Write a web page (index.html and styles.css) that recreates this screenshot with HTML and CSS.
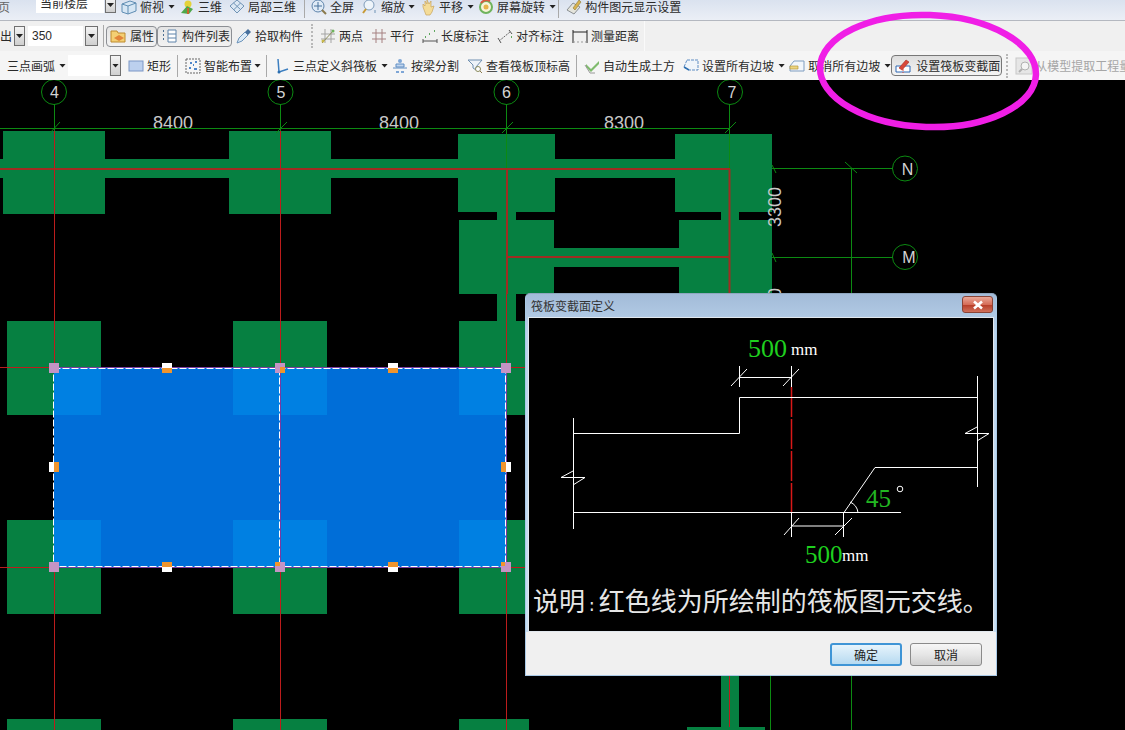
FILE: index.html
```html
<!DOCTYPE html>
<html lang="zh">
<head>
<meta charset="utf-8">
<title>筏板变截面定义</title>
<link rel="stylesheet" href="styles.css">
</head>
<body>
<div class="app">
  <div class="row row-one">
    <span class="lbl page-mark">页</span>
    <div class="combo m26"><span class="field w68">当前楼层</span><span class="cbtn m1 w11"><i class="arrow"></i></span></div>
    <div class="tool m5"><svg class="ico" viewBox="0 0 16 16"><path d="M1 5 9 2l6 2v8l-8 3-6-2z" fill="#d6e6f4" stroke="#5f8db3"/><path d="M1 5l6 2v8M7 7l8-3" fill="none" stroke="#5f8db3"/></svg><span class="lbl">俯视</span></div><i class="arrow m4"></i>
    <div class="tool m4"><svg class="ico" viewBox="0 0 16 16"><circle cx="9" cy="5" r="3.500" fill="#e4d23a"/><path d="M2 14 8 7l6 3-4 5z" fill="#4fa84a"/><path d="M9 9v6" stroke="#c9662a" stroke-width="2"/></svg><span class="lbl">三维</span></div>
    <div class="tool m7"><svg class="ico" viewBox="0 0 16 16"><path d="M8 1l7 6-7 7-7-7z" fill="#dbe7f3" stroke="#6f93b5"/><path d="M4.500 4 11.500 10.500M8 7.500 4.500 11M11.500 4 8 7.500" stroke="#6f93b5" fill="none"/></svg><span class="lbl">局部三维</span></div>
    <i class="sep m8"></i>
    <div class="tool m6"><svg class="ico" viewBox="0 0 16 16"><circle cx="7" cy="7" r="6" fill="#dfeaf6" stroke="#5f84ab"/><path d="M7 3v8M3 7h8" stroke="#47709b"/><path d="M11 11l4 4" stroke="#8a7a4c" stroke-width="2"/></svg><span class="lbl">全屏</span></div>
    <div class="tool m8"><svg class="ico" viewBox="0 0 16 16"><circle cx="7" cy="6" r="5" fill="#eef4fa" stroke="#7f9cba"/><path d="M4 10l-3 4" stroke="#c79a36" stroke-width="2"/><path d="M13 11v3" stroke="#6f93b5"/></svg><span class="lbl">缩放</span></div><i class="arrow m3"></i>
    <div class="tool m5"><svg class="ico" viewBox="0 0 16 16"><path d="M3 8V5l2 2V2l2 3V1l2 4 2-3v6l3-1-2 6-2 3H6z" fill="#f4dc98" stroke="#c9a55c" stroke-width=".7"/></svg><span class="lbl">平移</span></div><i class="arrow m4"></i>
    <div class="tool m4"><svg class="ico" viewBox="0 0 16 16"><circle cx="8" cy="8" r="6" fill="#f7f3d8" stroke="#6fb35d" stroke-width="2"/><path d="M3 4a7 7 0 0 1 9-2" fill="none" stroke="#d9573f" stroke-width="2"/><circle cx="8" cy="8" r="2.500" fill="#e7b34a"/></svg><span class="lbl">屏幕旋转</span></div><i class="arrow m4"></i>
    <i class="sep m2"></i>
    <div class="tool m7"><svg class="ico" viewBox="0 0 16 16"><path d="M1 11l6-7 7 4-6 7z" fill="#e4e4dc" stroke="#8a8f92"/><path d="M7 9l6-8 2 2-6 8z" fill="#d8b24e" stroke="#8c7a3a" stroke-width=".6"/></svg><span class="lbl">构件图元显示设置</span></div>
  </div>

  <div class="row row-two">
    <span class="lbl">出</span>
    <span class="cbtn m2 w11"><i class="arrow"></i></span>
    <div class="combo m3"><span class="field w55 num">350</span><span class="cbtn m2 w13"><i class="arrow"></i></span></div>
    <i class="sep m5"></i>
    <div class="tool pressed m2 w51"><svg class="ico" viewBox="0 0 16 16"><path d="M1 3h6l1 2h7v9H1z" fill="#f4cf73" stroke="#bd8a2e"/><path d="M4 10l5-3 5 3-5 3z" fill="#e2843a"/></svg><span class="lbl l1">属性</span></div>
    <div class="tool pressed w75"><svg class="ico" viewBox="0 0 16 16"><path d="M7 2h8v12H7z" fill="#fff" stroke="#5f84ab"/><path d="M7 6h8M7 10h8" stroke="#5f84ab"/><path d="M2 3h2M2 7h2M2 11h2" stroke="#4d6f92" stroke-width="2" stroke-dasharray="1 1"/></svg><span class="lbl l2">构件列表</span></div>
    <div class="tool m4"><svg class="ico" viewBox="0 0 16 16"><path d="M1 15l2-5 6-6 3 3-6 6z" fill="#dbeaf7" stroke="#6b93ba"/><path d="M9 4l3-3 3 3-3 3z" fill="#466f9c"/></svg><span class="lbl">拾取构件</span></div>
    <i class="grip m8"></i>
    <div class="tool m7"><svg class="ico" viewBox="0 0 16 16"><path d="M1 6h14M1 11h14M5 1v14M11 1v14" stroke="#a3a3a3" fill="none"/><path d="M2 15 14 2" stroke="#8c8c5c"/><circle cx="3" cy="13" r="1.500" fill="#c9b84a"/><circle cx="13" cy="3" r="1.500" fill="#6fb35d"/></svg><span class="lbl">两点</span></div>
    <div class="tool m8"><svg class="ico" viewBox="0 0 16 16"><path d="M1 5h14M1 11h14M5 1v14M11 1v14" stroke="#a58080" fill="none"/></svg><span class="lbl">平行</span></div>
    <div class="tool m8"><svg class="ico" viewBox="0 0 16 16"><path d="M1 11v4M15 11v4M1 13h14" stroke="#555" fill="none"/><path d="M3 9h1M7 6h1M12 3h1" stroke="#5fa85f" stroke-width="2"/></svg><span class="lbl">长度标注</span></div>
    <div class="tool m8"><svg class="ico" viewBox="0 0 16 16"><path d="M2 13 13 4" stroke="#666" stroke-dasharray="2 1"/><path d="M1 10l3 5M12 2l3 4" stroke="#555" fill="none"/><path d="M14 9h1" stroke="#5fa85f" stroke-width="2"/></svg><span class="lbl">对齐标注</span></div>
    <div class="tool m8"><svg class="ico" viewBox="0 0 16 16"><path d="M1 2v13M15 2v13M1 4h14" stroke="#222" fill="none"/><path d="M1 14h14" stroke="#999" stroke-dasharray="2 2"/></svg><span class="lbl">测量距离</span></div>
    <i class="row-end m5"></i>
  </div>

  <div class="row row-three">
    <span class="lbl m7">三点画弧</span><i class="arrow m4"></i>
    <div class="combo m2"><span class="field w41"></span><span class="cbtn m1 w11"><i class="arrow"></i></span></div>
    <div class="tool m7"><svg class="ico" viewBox="0 0 16 16"><rect x="1" y="3" width="14" height="10" fill="#bcd0ee" stroke="#7c97c6"/></svg><span class="lbl">矩形</span></div>
    <i class="sep m6"></i>
    <div class="tool m7"><svg class="ico" viewBox="0 0 16 16"><rect x="1" y="1" width="14" height="14" fill="#f6f6f6" stroke="#666" stroke-dasharray="2 1"/><path d="M5 5h2M10 4h2M4 10h2M9 11h3M8 7h1" stroke="#4e86c9" stroke-width="2"/></svg><span class="lbl">智能布置</span></div><i class="arrow m2"></i>
    <i class="sep m5"></i>
    <div class="tool m7"><svg class="ico" viewBox="0 0 16 16"><path d="M4 1 5 14 14 11" fill="none" stroke="#3d7fc0" stroke-width="1.500"/><circle cx="5" cy="14" r="1.500" fill="#2b6eb0"/></svg><span class="lbl">三点定义斜筏板</span></div><i class="arrow m4"></i>
    <div class="tool m4"><svg class="ico" viewBox="0 0 16 16"><circle cx="8" cy="3" r="2" fill="#7ea6d6"/><path d="M4 6h8v3H4zM1 10h14" fill="#c2d6ee" stroke="#5f8dc3"/><path d="M4 13h3v2H4zM9 13h3v2H9z" fill="#7ea6d6"/></svg><span class="lbl">按梁分割</span></div>
    <div class="tool m8"><svg class="ico" viewBox="0 0 16 16"><path d="M1 2h14L9 9v3L6 10V7z" fill="#eef3f9" stroke="#6f8fb0"/><circle cx="11" cy="11" r="2.500" fill="#fff" stroke="#8a8a5c"/><path d="M13 13l2 2" stroke="#8a7a4c"/></svg><span class="lbl">查看筏板顶标高</span></div>
    <i class="sep m6"></i>
    <div class="tool m7"><svg class="ico" viewBox="0 0 16 16"><path d="M2 9l5 5 8-8v-3l-8 8-5-5z" fill="#7fbb6d"/><path d="M1 7l5 8h5" fill="none" stroke="#9a9a9a"/></svg><span class="lbl">自动生成土方</span></div>
    <div class="tool m8"><svg class="ico" viewBox="0 0 16 16"><path d="M4 2h11v10H6L1 9z" fill="#f0f5fa" stroke="#5f8dc3" stroke-dasharray="3 1"/><path d="M1 9l5 3" stroke="#2b6eb0" stroke-width="1.500"/></svg><span class="lbl">设置所有边坡</span></div><i class="arrow m4"></i>
    <div class="tool m4"><svg class="ico" viewBox="0 0 16 16"><path d="M5 3h10v10H1V8z" fill="#f2f6fb" stroke="#7e9dc0"/><path d="M1 8h8v3H1z" fill="#ecd480" stroke="#b89a3e" stroke-width=".7"/></svg><span class="lbl">取消所有边坡</span></div><i class="arrow m4"></i>
    <div class="tool pressed active w111"><svg class="ico" viewBox="0 0 16 16"><path d="M1 8h14v6H1z" fill="#fff" stroke="#2c66b2"/><path d="M4 10 11 2l3 2-7 8z" fill="#d8483a" stroke="#a8281e" stroke-width=".6"/><path d="M8 8v7" stroke="#d8483a" stroke-dasharray="2 1"/></svg><span class="lbl l3">设置筏板变截面</span></div>
    <i class="grip m4"></i>
    <div class="tool m8 off"><svg class="ico" viewBox="0 0 16 16"><rect x="0" y="0" width="16" height="16" fill="#e6e6e6" stroke="#c8c8c8"/><circle cx="9" cy="8" r="4" fill="#f4f4f4" stroke="#b0b0b0"/><path d="M6 11l-3 3" stroke="#b0b0b0" stroke-width="2"/></svg><span class="lbl">从模型提取工程量</span></div>
  </div>

  <svg class="canvas" viewBox="0 80 1125 650">
    <g class="block">
      <rect x="3" y="131" width="102" height="83"/><rect x="229" y="131" width="102" height="83"/>
      <rect x="458" y="134" width="97" height="78"/><rect x="675" y="134" width="97" height="78"/>
      <rect x="0" y="159" width="675" height="19"/>
      <rect x="497" y="212" width="19" height="9"/><rect x="721" y="212" width="18" height="9"/>
      <rect x="459" y="220" width="95" height="74"/><rect x="679" y="220" width="93" height="74"/>
      <rect x="554" y="248" width="125" height="19"/><rect x="497" y="294" width="19" height="30"/>
      <rect x="7" y="321" width="94" height="94"/><rect x="233" y="321" width="94" height="94"/><rect x="459" y="321" width="70" height="94"/>
      <rect x="7" y="520" width="94" height="94"/><rect x="233" y="520" width="94" height="94"/><rect x="459" y="520" width="70" height="94"/>
      <rect x="7" y="719" width="94" height="11"/><rect x="233" y="719" width="94" height="11"/><rect x="459" y="719" width="70" height="11"/>
      <rect x="721" y="676" width="18" height="52"/><rect x="687" y="727" width="78" height="3"/>
    </g>
    <g class="dim-text">
      <text x="173" y="129" text-anchor="middle">8400</text>
      <text x="399" y="129" text-anchor="middle">8400</text>
      <text x="624" y="129" text-anchor="middle">8300</text>
      <text transform="translate(781 207) rotate(-90)" text-anchor="middle">3300</text>
      <text transform="translate(781 308) rotate(-90)" text-anchor="middle">3300</text>
    </g>
    <g class="axis">
      <path d="M0 128.500H730M54.500 104V131M280.500 104V131M506.500 104V169M729.500 104V169M772 168.500H893M772 257.500H893M851.500 168.500V294M851.500 676V730M770.500 676V730"/>
      <path d="M50 133 60 122M276 133 287 122M502 133 513 122M725 133 736 122M845 162 857 173M772 165 776 173M772 253 776 262"/>
      <circle cx="54" cy="92" r="12.500"/><circle cx="280.500" cy="92" r="12.500"/><circle cx="506.500" cy="92" r="12.500"/><circle cx="730" cy="92" r="12.500"/><circle cx="905" cy="168.500" r="12.500"/><circle cx="905" cy="257" r="12.500"/>
    </g>
    <g class="axis-text" text-anchor="middle">
      <text x="54.500" y="98">4</text><text x="281" y="98">5</text><text x="506.500" y="98">6</text><text x="732" y="98">7</text><text x="907.500" y="174.500">N</text><text x="909" y="263">M</text>
    </g>
    <g class="grid-red">
      <path class="thick" d="M0 169H730M507 257H730M507 169V294M729.500 169V294"/>
      <path d="M54.500 131V730M280.500 131V730M506.500 294V730M729.500 676V727M0 367.500H530M0 567.500H530"/>
    </g>
    <rect class="slab" x="54" y="368" width="452" height="199"/>
    <g class="slab-lit">
      <rect x="54" y="368" width="47" height="47"/><rect x="233" y="368" width="94" height="47"/><rect x="459" y="368" width="47" height="47"/>
      <rect x="54" y="520" width="47" height="47"/><rect x="233" y="520" width="94" height="47"/><rect x="459" y="520" width="47" height="47"/>
    </g>
    <path class="slab-red" d="M280.500 368V567M54 567.500H506M506.500 368V567M54 367.500H506"/>
    <path class="slab-edge" d="M53.500 368.500H505.500V566.500H53.500ZM279.500 368.500V566.500"/>
    <g class="h-corner">
      <rect x="49" y="363" width="10" height="10"/><rect x="275" y="363" width="10" height="10"/><rect x="501" y="363" width="10" height="10"/>
      <rect x="49" y="562" width="10" height="10"/><rect x="275" y="562" width="10" height="10"/><rect x="501" y="562" width="10" height="10"/>
    </g>
    <g class="h-white">
      <rect x="162" y="363" width="10" height="5"/><rect x="388" y="363" width="10" height="5"/>
      <rect x="162" y="567" width="10" height="5"/><rect x="388" y="567" width="10" height="5"/>
      <rect x="49" y="462" width="5" height="10"/><rect x="506" y="462" width="5" height="10"/>
    </g>
    <g class="h-orange">
      <rect x="162" y="368" width="10" height="5"/><rect x="388" y="368" width="10" height="5"/>
      <rect x="162" y="562" width="10" height="5"/><rect x="388" y="562" width="10" height="5"/>
      <rect x="54" y="462" width="5" height="10"/><rect x="501" y="462" width="5" height="10"/>
      <rect x="280" y="367" width="5" height="6"/><rect x="275" y="562" width="5" height="4"/><rect x="501" y="562" width="4" height="4"/>
    </g>
  </svg>

  <div class="dialog">
    <div class="dlg-title"><span>筏板变截面定义</span>
      <span class="dlg-close"><svg class="dlg-x" viewBox="0 0 12 10"><path d="M2 1.500 10 8.500M10 1.500 2 8.500"/></svg></span>
    </div>
    <div class="dlg-body">
      <svg class="diagram" viewBox="529 318 464 313">
        <path class="red-dash" d="M791.500 387V512"/>
        <g class="white-line">
          <path d="M739.500 377.500H791.500M739.500 366V387M791.500 366V387M731 386 747 369M783 386 799 369"/>
          <path d="M573.500 433.500H739.500V397.500H977.500M977.500 376V487M977 427 965 433.500H989L977 441"/>
          <path d="M573.500 418V529M573 471 561 477.500H585L573 485M573.500 512.500H901"/>
          <path d="M844 512.500 875 467.500H977.500M850 502Q857 505 858 512.500"/>
          <path d="M791.500 513V537M843.500 513V537M791.500 526H843.500M784 535 799 518M835 535 852 518"/>
          <circle cx="900" cy="489" r="2.800"/>
        </g>
        <text class="t-green t26" x="748" y="357">500</text>
        <text class="t-mm" x="791" y="355">mm</text>
        <text class="t-green2 t24" x="866" y="507">45</text>
        <text class="t-green t25" x="805" y="563">500</text>
        <text class="t-mm" x="842" y="561">mm</text>
        <text class="t-note" x="533" y="611">说明<tspan class="t-colon" dx="2">:</tspan><tspan dx="2">红色线为所绘制的筏板图元交线。</tspan></text>
      </svg>
    </div>
    <div class="dlg-foot">
      <button class="btn btn-def" type="button">确定</button>
      <button class="btn" type="button">取消</button>
    </div>
  </div>

  <svg class="mark" viewBox="0 0 1125 730"><ellipse cx="928" cy="71" rx="108" ry="56" transform="rotate(2 928 71)"/></svg>
</div>
</body>
</html>
```
FILE: styles.css
```css
html, body { margin: 0; padding: 0; background: #000; }
.app {
  position: relative; width: 1125px; height: 730px; overflow: hidden;
  display: flex; flex-direction: column;
  font-family: "Noto Sans CJK SC", "Liberation Sans", sans-serif;
  font-size: 12px; color: #2a2a2a;
}
.row { display: flex; align-items: center; flex: none; white-space: nowrap; box-sizing: border-box; overflow: hidden; }
.row-one { height: 21px; padding-bottom: 7px; background: linear-gradient(#dae2ef, #ebeff6); border-bottom: 1px solid #b4b8c0; }
.row-two { height: 30px; background: #f0f0f0; }
.row-three { height: 29px; background: #f5f5f5; }
.lbl { line-height: 12px; flex: none; }
.page-mark { margin-left: -2px; color: #666; }
.tool { display: flex; align-items: center; gap: 3px; flex: none; }
.ico { width: 16px; height: 16px; flex: none; overflow: visible; }
.arrow { display: block; flex: none; width: 7px; height: 4px; background: #222; clip-path: polygon(0 0, 100% 0, 50% 100%); }
.sep { display: block; flex: none; width: 1px; height: 22px; background: #a9a9a9; }
.grip { display: block; flex: none; width: 0; height: 24px; border-left: 2px dotted #b8b8b8; }
.row-end { display: block; flex: none; width: 1px; height: 30px; background: #fafafa; }
.combo { display: flex; align-items: center; flex: none; }
.field { display: block; flex: none; height: 20px; line-height: 20px; background: #fff; padding-left: 4px; box-sizing: border-box; }
.row-one .field { height: 16px; line-height: 12px; margin-top: -3px; }
.row-one .cbtn { height: 16px; margin-top: -3px; }
.row-three .field, .row-three .cbtn { height: 21px; }
.num { font-family: "Liberation Sans", sans-serif; }
.cbtn { display: flex; align-items: center; justify-content: center; flex: none; height: 20px; box-sizing: border-box; border: 1px solid #707070; background: linear-gradient(#f4f4f4, #cfcfcf); }
.w11 { width: 11px; } .w13 { width: 13px; } .w41 { width: 41px; } .w51 { width: 51px; } .w55 { width: 55px; } .w68 { width: 68px; } .w75 { width: 75px; } .w111 { width: 111px; }
.m1 { margin-left: 1px; } .m2 { margin-left: 2px; } .m3 { margin-left: 3px; } .m4 { margin-left: 4px; } .m5 { margin-left: 5px; } .m6 { margin-left: 6px; } .m7 { margin-left: 7px; } .m8 { margin-left: 8px; } .m26 { margin-left: 26px; }
.pressed { box-sizing: border-box; height: 21px; padding-left: 3px; gap: 0; border: 1px solid #8c8f94; border-radius: 4px; background: linear-gradient(#e4e4e4, #f2f2f2); }
.active { background: linear-gradient(#dedede, #f4f4f4); border-color: #777; }
.l1 { margin-left: 4px; } .l2 { margin-left: 5px; } .l3 { margin-left: 5px; }
.off { color: #a6a6a6; }

.canvas { display: block; flex: none; width: 1125px; height: 650px; background: #000; }
.block rect { fill: #068041; }
.dim-text text { font: 18px "Liberation Sans", sans-serif; fill: #c8c8c8; }
.axis path, .axis circle { fill: none; stroke: #0c8a12; stroke-width: 1; }
.axis-text text { font: 16px "Liberation Sans", sans-serif; fill: #d4d4d4; }
.grid-red path { fill: none; stroke: #bc1c1c; stroke-width: 1; }
.grid-red .thick { stroke: #a02c22; stroke-width: 2; }
.slab { fill: #006ed8; }
.slab-lit rect { fill: #0080e2; }
.slab-red { fill: none; stroke: #7a3aa0; stroke-width: 1; }
.slab-edge { fill: none; stroke: #fff; stroke-width: 1; stroke-dasharray: 7 2; }
.h-corner rect { fill: #c494c4; }
.h-white rect { fill: #fff; }
.h-orange rect { fill: #f0952e; }

.dialog {
  position: absolute; left: 525px; top: 293px; width: 472px; height: 383px;
  box-sizing: border-box; display: flex; flex-direction: column;
  border: 1px solid #a9c9e6; border-top-color: #8fa6bf; border-radius: 5px 5px 0 0;
  background: linear-gradient(#a3bbd8, #bad4ed 40px, #c9e0f4);
}
.dlg-title { display: flex; justify-content: space-between; align-items: center; height: 23px; flex: none; padding: 0 3px 0 5px; box-sizing: border-box; color: #333; line-height: 16px; }
.dlg-close { display: flex; align-items: center; justify-content: center; width: 31px; height: 17px; box-sizing: border-box; margin-top: -2px; border: 1px solid #8a4436; border-radius: 3px; background: linear-gradient(#e9a798, #d66d58 50%, #b83f2a 55%, #d0705a); }
.dlg-x { width: 12px; height: 10px; }
.dlg-x path { fill: none; stroke: #fff; stroke-width: 2.600; }
.dlg-body { flex: none; width: 466px; height: 315px; margin-left: 2px; box-sizing: border-box; border: 1px solid #e2e8ee; background: #000; }
.diagram { display: block; width: 464px; height: 313px; }
.red-dash { fill: none; stroke: #d81818; stroke-width: 1.500; stroke-dasharray: 30 2; }
.white-line path, .white-line circle { fill: none; stroke: #fff; stroke-width: 1; }
.t-green, .t-green2, .t-mm { font-family: "Liberation Serif", serif; }
.t-green { fill: #1fd01f; }
.t-green2 { fill: #22b822; }
.t26 { font-size: 26px; } .t25 { font-size: 25px; } .t24 { font-size: 25px; }
.t-mm { fill: #fff; font-size: 17px; }
.t-note { fill: #e6e6e6; font-size: 26px; font-family: "Noto Sans CJK SC", sans-serif; }
.t-colon { font-family: "Liberation Mono", monospace; font-size: 16px; }
.dlg-foot { flex: 1; display: flex; justify-content: flex-end; align-items: flex-start; gap: 8px; padding: 11px 14px 0 0; background: #f0f0f0; }
.btn { width: 72px; height: 23px; padding: 0; box-sizing: border-box; font: 12px "Noto Sans CJK SC", sans-serif; color: #222; border: 1px solid #8a8a8a; border-radius: 3px; background: linear-gradient(#f6f6f6, #e6e6e6 50%, #cfcfcf); }
.btn-def { border: 2px solid #3f95d6; background: linear-gradient(#e6f4fc, #cfe7f6 50%, #b6daf1); }

.mark { position: absolute; left: 0; top: 0; width: 1125px; height: 730px; pointer-events: none; }
.mark ellipse { fill: none; stroke: #f01ee6; stroke-width: 6.500; }
```
